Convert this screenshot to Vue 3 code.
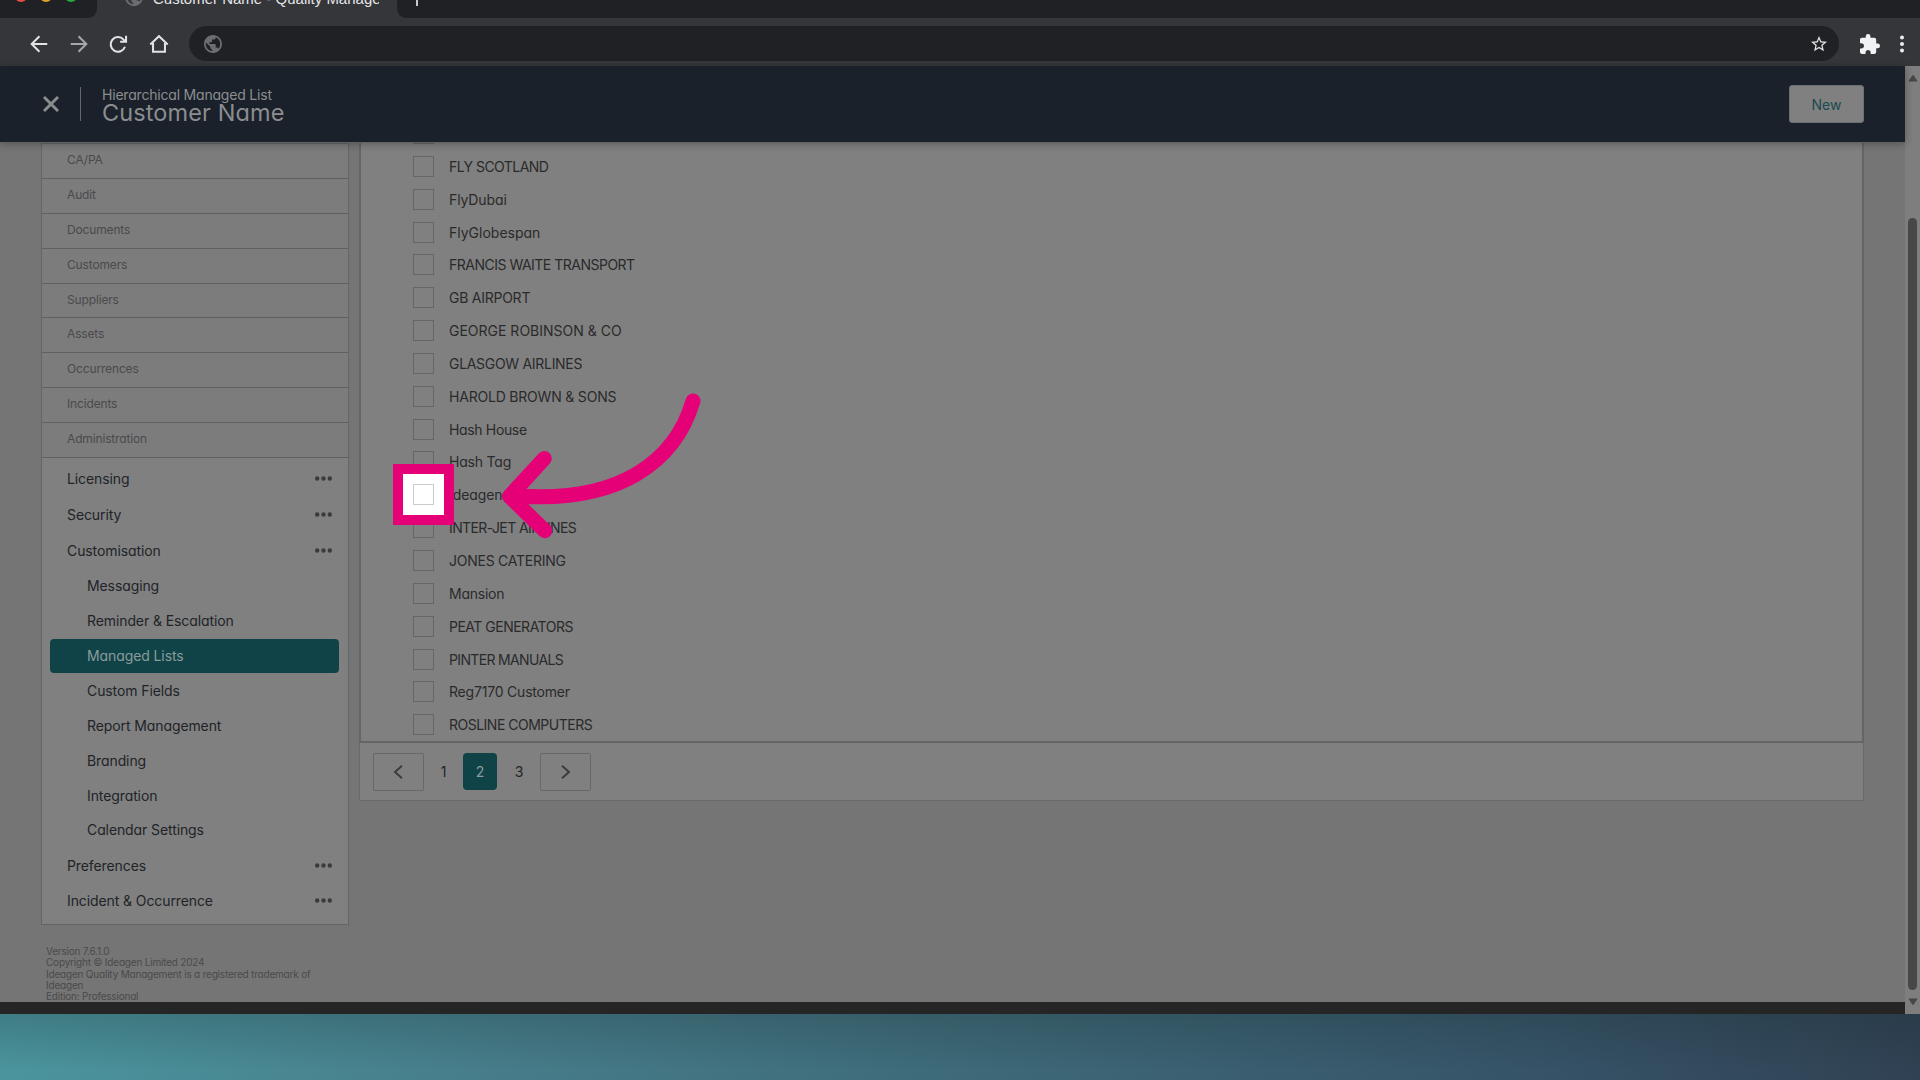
<script setup>
import { ref } from 'vue'

const modules = ['CA/PA', 'Audit', 'Documents', 'Customers', 'Suppliers', 'Assets', 'Occurrences', 'Incidents', 'Administration']

const menu = ref([
  { label: 'Licensing', more: true },
  { label: 'Security', more: true },
  { label: 'Customisation', more: true },
  { label: 'Messaging', sub: true },
  { label: 'Reminder & Escalation', sub: true },
  { label: 'Managed Lists', sub: true, active: true },
  { label: 'Custom Fields', sub: true },
  { label: 'Report Management', sub: true },
  { label: 'Branding', sub: true },
  { label: 'Integration', sub: true },
  { label: 'Calendar Settings', sub: true },
  { label: 'Preferences', more: true },
  { label: 'Incident & Occurrence', more: true }
])

// the first row is scrolled under the header
const customers = ref([
  { name: '', track: 0 },
  { name: 'FLY SCOTLAND', track: -0.55 },
  { name: 'FlyDubai', track: -0.1 },
  { name: 'FlyGlobespan', track: 0 },
  { name: 'FRANCIS WAITE TRANSPORT', track: -0.5 },
  { name: 'GB AIRPORT', track: -0.25 },
  { name: 'GEORGE ROBINSON & CO', track: 0 },
  { name: 'GLASGOW AIRLINES', track: -0.3 },
  { name: 'HAROLD BROWN & SONS', track: -0.2 },
  { name: 'Hash House', track: -0.35 },
  { name: 'Hash Tag', track: -0.2 },
  { name: 'Ideagen', track: -0.1 },
  { name: 'INTER-JET AIRLINES', track: -0.6 },
  { name: 'JONES CATERING', track: -0.25 },
  { name: 'Mansion', track: -0.25 },
  { name: 'PEAT GENERATORS', track: -0.5 },
  { name: 'PINTER MANUALS', track: -0.65 },
  { name: 'Reg7170 Customer', track: -0.2 },
  { name: 'ROSLINE COMPUTERS', track: -0.5 }
])

const page = ref(2)
</script>

<template>
  <div class="screen">
    <div class="tabs">
      <div class="lights">
        <i class="red"></i><i class="amber"></i><i class="green"></i>
      </div>
      <div class="tab">
        <svg class="globe" viewBox="2 2 20 20"><path d="M12 2C6.48 2 2 6.48 2 12s4.48 10 10 10 10-4.48 10-10S17.52 2 12 2zm-1 17.93c-3.95-.49-7-3.85-7-7.93 0-.62.08-1.21.21-1.79L9 15v1c0 1.1.9 2 2 2v1.93zm6.9-2.54c-.26-.81-1-1.39-1.9-1.39h-1v-3c0-.55-.45-1-1-1H8v-2h2c.55 0 1-.45 1-1V7h2c1.1 0 2-.9 2-2v-.41c2.93 1.19 5 4.06 5 7.41 0 2.08-.8 3.97-2.1 5.39z" /></svg>
        <span class="tab-title">Customer Name - Quality Manage</span>
      </div>
      <div class="strip"><span class="plus"></span></div>
    </div>

    <div class="toolbar">
      <svg class="nav" viewBox="0 0 24 24"><path d="M21 12H4M12.500 3.500L4 12l8.500 8.500" /></svg>
      <svg class="nav dim" viewBox="0 0 24 24"><path d="M3 12h17M11.500 3.500L20 12l-8.500 8.500" /></svg>
      <svg class="nav" viewBox="0 0 24 24"><path d="M18.500 15A8 8 0 1 1 17 7.200l2 2M19.700 3v6.500h-6.500" /></svg>
      <svg class="nav" viewBox="0 0 24 24"><path d="M2.500 12.500L12 3.500l9.500 9M5.500 11v9.500h13V11" /></svg>
      <div class="address">
        <svg class="globe" viewBox="2 2 20 20"><path d="M12 2C6.48 2 2 6.48 2 12s4.48 10 10 10 10-4.48 10-10S17.52 2 12 2zm-1 17.93c-3.95-.49-7-3.85-7-7.93 0-.62.08-1.21.21-1.79L9 15v1c0 1.1.9 2 2 2v1.93zm6.9-2.54c-.26-.81-1-1.39-1.9-1.39h-1v-3c0-.55-.45-1-1-1H8v-2h2c.55 0 1-.45 1-1V7h2c1.1 0 2-.9 2-2v-.41c2.93 1.19 5 4.06 5 7.41 0 2.08-.8 3.97-2.1 5.39z" /></svg>
        <svg class="star" viewBox="2 2 20 20"><path d="M22 9.24l-7.19-.62L12 2 9.19 8.63 2 9.24l5.46 4.73L5.82 21 12 17.27 18.18 21l-1.63-7.03L22 9.24zM12 15.4l-3.76 2.27 1-4.28-3.32-2.88 4.38-.38L12 6.1l1.71 4.04 4.38.38-3.32 2.88 1 4.28L12 15.4z" /></svg>
      </div>
      <svg class="puzzle" viewBox="2 1 21 21"><path d="M20.5 11H19V7c0-1.100-.9-2-2-2h-4V3.500a2.500 2.500 0 0 0-5 0V5H4c-1.100 0-2 .9-2 2v3.800h1.500c1.490 0 2.700 1.210 2.700 2.700s-1.210 2.700-2.700 2.700H2V20c0 1.100.9 2 2 2h3.800v-1.500c0-1.490 1.210-2.700 2.700-2.700s2.700 1.210 2.700 2.700V22H17c1.100 0 2-.9 2-2v-4h1.500a2.500 2.500 0 0 0 0-5z" /></svg>
      <svg class="kebab" viewBox="0 0 4 18"><circle cx="2" cy="2.500" r="2" /><circle cx="2" cy="9" r="2" /><circle cx="2" cy="15.500" r="2" /></svg>
    </div>

    <div class="window">
      <div class="page">
        <header class="header">
          <svg class="close" viewBox="0 0 16 16"><path d="M1 1l14 14M15 1L1 15" /></svg>
          <span class="divider"></span>
          <div class="titles">
            <div class="subtitle">Hierarchical Managed List</div>
            <div class="title">Customer Name</div>
          </div>
          <button class="new">New</button>
        </header>

        <div class="content">
          <aside class="side">
            <div class="panel">
              <div v-for="m in modules" :key="m" class="module">{{ m }}</div>
              <div class="menu">
                <div
                  v-for="item in menu"
                  :key="item.label"
                  class="item"
                  :class="{ sub: item.sub, active: item.active }">
                  <span>{{ item.label }}</span>
                  <svg v-if="item.more" class="dots" viewBox="0 0 17 5"><circle cx="2.200" cy="2.500" r="2.200" /><circle cx="8.500" cy="2.500" r="2.200" /><circle cx="14.800" cy="2.500" r="2.200" /></svg>
                </div>
              </div>
            </div>
            <div class="version">
              <div>Version 7.6.1.0</div>
              <div>Copyright © Ideagen Limited 2024</div>
              <div>Ideagen Quality Management is a registered trademark of Ideagen</div>
              <div>Edition: Professional</div>
            </div>
          </aside>

          <main class="main">
            <div class="list">
              <div class="rows">
                <div v-for="c in customers" :key="c.name" class="row">
                  <span class="box"></span>
                  <span class="name" :style="{ letterSpacing: c.track + 'px' }">{{ c.name }}</span>
                </div>
              </div>
            </div>
            <div class="pager">
              <button class="step prev"><svg viewBox="0 0 10 14"><path d="M9 .8L2 7l7 6.200" /></svg></button>
              <span v-for="n in 3" :key="n" class="num" :class="{ current: n === page }">{{ n }}</span>
              <button class="step next"><svg viewBox="0 0 10 14"><path d="M1 .8L8 7l-7 6.200" /></svg></button>
            </div>
          </main>
        </div>
        <div class="bottom"></div>
      </div>

      <div class="scrollbar">
        <svg class="tri" viewBox="0 0 10 8"><path d="M5 1.200L9 7H1z" /></svg>
        <span class="thumb"></span>
        <svg class="tri" viewBox="0 0 10 8"><path d="M5 6.800L9 1H1z" /></svg>
      </div>
    </div>
    <div class="desktop"></div>

    <!-- callout over the list -->
    <div class="focus"><span class="box"></span></div>
    <svg class="arrow" viewBox="490 380 220 170">
      <path d="M693 401C676 459 622 505 512 495.500M544.300 458.500L509.500 496.300l35.200 34.400" />
    </svg>
  </div>
</template>

<style>
body {
  background: #3d6b7b;
  overflow: hidden;
}
</style>

<style scoped>
.screen {
  position: relative;
  width: 1920px;
  height: 1080px;
  display: flex;
  flex-direction: column;
  overflow: hidden;
  font-family: Inter, "Liberation Sans", sans-serif;
  font-feature-settings: "cv11";
  font-size: 14px;
  color: #202428;
}

svg {
  display: block;
  flex: none;
}

button {
  font: inherit;
  padding: 0;
}

.tabs {
  height: 18px;
  display: flex;
  background: #35363a;
  overflow: hidden;
}

.lights {
  width: 97px;
  box-sizing: border-box;
  padding-left: 15px;
  display: flex;
  gap: 13px;
  background: #202124;
  border-bottom-right-radius: 9px;
}

.lights i {
  width: 12px;
  height: 12px;
  margin-top: -10.5px;
  border-radius: 50%;
}

.red { background: #ed4b45; }
.amber { background: #e0a127; }
.green { background: #27ab3a; }

.tab {
  width: 300px;
  height: 18px;
  display: flex;
  box-sizing: border-box;
  padding-left: 28px;
}

.tab .globe {
  margin-top: -12px;
}

.tab-title {
  width: 226px;
  margin: -10px 0 0 10px;
  overflow: hidden;
  white-space: nowrap;
  font-family: "Liberation Sans", Arial, sans-serif;
  font-size: 15px;
  line-height: 18px;
  color: #e4e5e7;
}

.strip {
  flex: 1;
  background: #202124;
  border-bottom-left-radius: 9px;
}

.plus {
  display: block;
  width: 2px;
  height: 6px;
  margin-left: 19px;
  background: #c8c9cb;
}

.globe {
  width: 18px;
  height: 18px;
  fill: #6b6d71;
}

.toolbar {
  height: 48px;
  box-sizing: border-box;
  padding: 4px 12px 0 28px;
  display: flex;
  align-items: center;
  background: #35363a;
}

.toolbar > * {
  margin-top: -1px;
}

.nav {
  width: 22px;
  height: 22px;
  margin-right: 18px;
  fill: none;
  stroke: #e2e3e4;
  stroke-width: 2.2;
}

.nav.dim {
  stroke: #a5a6a9;
}

.address {
  width: 1650px;
  height: 35px;
  box-sizing: border-box;
  padding: 0 12px 0 15px;
  margin-left: 1px;
  display: flex;
  align-items: center;
  justify-content: space-between;
  border-radius: 18px;
  background: #202124;
}

.star {
  width: 16px;
  height: 16px;
  fill: #e0e1e3;
}

.puzzle {
  width: 20px;
  height: 20px;
  margin-left: 21px;
  fill: #f1f2f4;
}

.kebab {
  width: 4px;
  height: 18px;
  margin-left: 20px;
  fill: #eceded;
}

.window {
  height: 948px;
  display: flex;
}

.page {
  width: 1905px;
  display: flex;
  flex-direction: column;
  background: #757575;
}

.header {
  position: relative;
  z-index: 1;
  height: 76px;
  box-sizing: border-box;
  padding: 0 41px 0 43px;
  display: flex;
  align-items: center;
  background: #1a212a;
  box-shadow: 0 1px 0 #606264, 0 2px 8px rgba(0, 0, 0, 0.3);
}

.close {
  width: 16px;
  height: 16px;
  fill: none;
  stroke: #8b8d90;
  stroke-width: 2.9;
}

.divider {
  width: 1px;
  height: 34px;
  margin: 0 21px;
  background: #64686c;
}

.titles {
  flex: 1;
  color: #8b8d90;
}

.subtitle {
  font-size: 14px;
  line-height: 16px;
  letter-spacing: -0.2px;
}

.title {
  font-size: 23.500px;
  line-height: 19px;
  letter-spacing: 0.1px;
}

.new {
  width: 75px;
  height: 38px;
  border: 1px solid #6c7072;
  border-radius: 3px;
  background: #808080;
  color: #174a50;
}

.content {
  height: 860px;
  display: flex;
  padding-left: 41px;
  overflow: hidden;
}

.side {
  width: 308px;
  padding-top: 1px;
}

.panel {
  height: 782px;
  box-sizing: border-box;
  border: 1px solid #616668;
  background: #808080;
  overflow: hidden;
}

.module {
  height: 34.880px;
  box-sizing: border-box;
  padding-left: 25px;
  border-bottom: 1px solid #5c6264;
  line-height: 32px;
  font-size: 12px;
  letter-spacing: -0.15px;
  background: #7c7c7c;
  color: #4a4a4c;
}

.menu {
  padding: 3px 9px 0 8px;
}

.item {
  height: 35.700px;
  display: flex;
  align-items: center;
  justify-content: space-between;
  padding: 0 7px 0 17px;
  letter-spacing: -0.1px;
}

.item.sub {
  height: 34.950px;
  padding-left: 37px;
}

.item.active {
  box-sizing: border-box;
  height: 33.950px;
  margin-top: 1px;
  border-radius: 4px;
  background: #0f4347;
  color: #8b9b9c;
}

.dots {
  width: 17px;
  height: 5px;
  fill: #3b3b3c;
}

.version {
  width: 276px;
  margin: 21px 0 0 5px;
  font-size: 10px;
  line-height: 11.300px;
  letter-spacing: -0.2px;
  color: #4a4a4a;
}

.main {
  width: 1505px;
  margin-left: 10px;
}

.list {
  height: 601px;
  box-sizing: border-box;
  border: 2px solid #646666;
  border-top: 0;
  background: #808080;
  overflow: hidden;
}

.rows {
  margin-top: -24.900px;
}

.row {
  height: 32.850px;
  display: flex;
  align-items: center;
  padding-left: 52px;
}

.box {
  width: 21px;
  height: 21px;
  box-sizing: border-box;
  border: 1px solid #666;
}

.name {
  margin-left: 15px;
  color: #2a2a2b;
}

.pager {
  height: 58px;
  box-sizing: border-box;
  padding: 0 13px;
  display: flex;
  align-items: center;
  border: 1px solid #696b6b;
  border-top: 0;
  background: #808080;
}

.step {
  width: 51px;
  height: 38px;
  box-sizing: border-box;
  display: flex;
  align-items: center;
  justify-content: center;
  border: 1px solid #656969;
  border-radius: 2px;
  background: transparent;
}

.step.prev {
  padding-right: 2px;
}

.step.next {
  margin-left: 4px;
}

.step svg {
  width: 10px;
  height: 14px;
  fill: none;
  stroke: #3a3a3a;
  stroke-width: 1.9;
}

.num {
  width: 34px;
  height: 37px;
  margin-left: 2.500px;
  border-radius: 4px;
  line-height: 37px;
  text-align: center;
}

.num.current {
  margin-right: 2.500px;
  background: #0f4347;
  color: #8b9b9c;
}

.bottom {
  height: 12px;
  background: #252525;
}

.scrollbar {
  width: 15px;
  box-sizing: border-box;
  padding: 8px 0;
  display: flex;
  flex-direction: column;
  align-items: center;
  justify-content: space-between;
  background: #7e7e7e;
}

.thumb {
  width: 9px;
  height: 772px;
  margin-top: 128px;
  border-radius: 5px;
  background: #474747;
}

.tri {
  width: 10px;
  height: 8px;
  fill: #474747;
  stroke: #474747;
  stroke-linejoin: round;
}

.desktop {
  height: 66px;
  background:
    linear-gradient(to bottom, rgba(20, 40, 40, 0.220), rgba(20, 40, 40, 0) 85%),
    linear-gradient(100deg, #4b959e 0%, #467c89 27%, #3d6877 52%, #365367 80%, #304153 100%);
}

.focus {
  position: absolute;
  left: 393px;
  top: 464px;
  width: 61px;
  height: 61px;
  box-sizing: border-box;
  border: 10px solid #e50077;
  background: #fff;
  display: flex;
  align-items: center;
  justify-content: center;
}

.focus .box {
  border-color: #ccc;
}

.arrow {
  position: absolute;
  left: 490px;
  top: 380px;
  width: 220px;
  height: 170px;
  fill: none;
  stroke: #e50077;
  stroke-width: 15;
  stroke-linecap: round;
  stroke-linejoin: round;
}
</style>
